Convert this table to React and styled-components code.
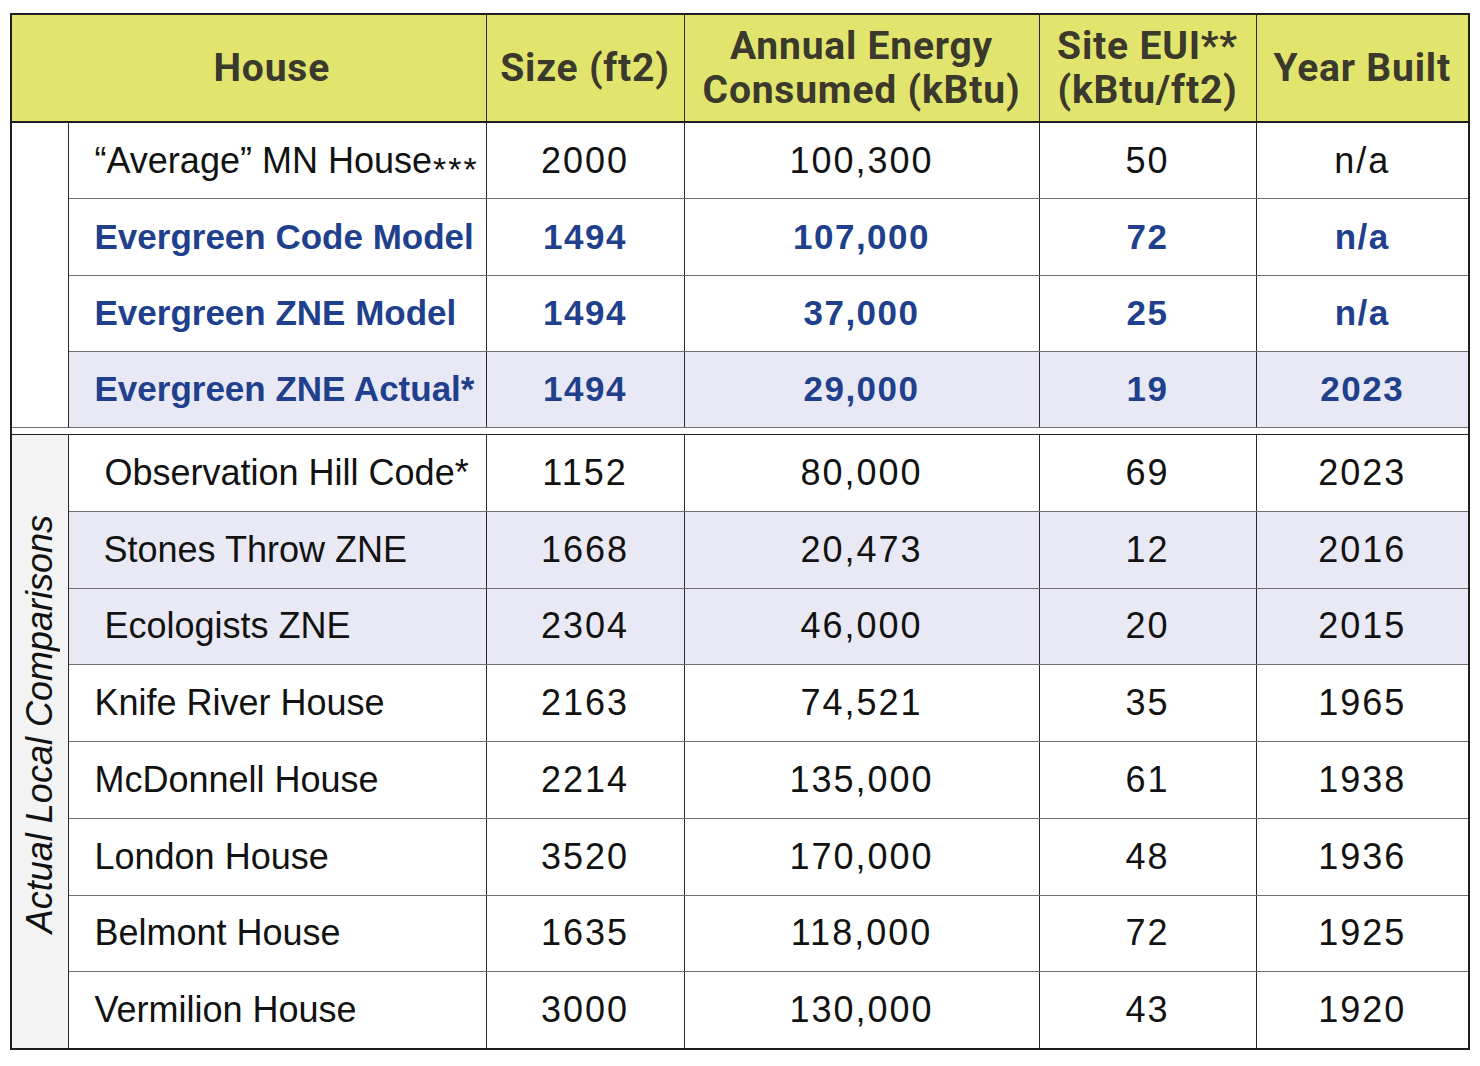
import React from 'react';
import styled, { createGlobalStyle } from 'styled-components';

const GlobalStyle = createGlobalStyle`
  html, body {
    margin: 0;
    padding: 0;
    background: #ffffff;
  }
  body {
    font-family: "Liberation Sans", Arial, sans-serif;
  }
`;

const Page = styled.div`
  padding: 13px 0 0 10px;
  width: 1480px;
  height: 1066px;
  box-sizing: border-box;
`;

const Table = styled.table`
  width: 1458px;
  table-layout: fixed;
  border-collapse: collapse;
  border: 2px solid #1e1e1e;
`;

const HeadCell = styled.th`
  height: 106px;
  padding: 0 ${(p) => p.$padRight || 0}px 0 ${(p) => p.$padLeft || 0}px;
  background: #e2e56d;
  color: #3a392b;
  font-family: Roboto, "Liberation Sans", sans-serif;
  font-weight: 700;
  font-size: 39px;
  line-height: 44px;
  letter-spacing: 0.8px;
  text-align: center;
  vertical-align: middle;
  white-space: nowrap;
  border-left: 1px solid #2a2a2a;
  border-bottom: 2px solid #1e1e1e;
`;

const Row = styled.tr`
  background: ${(p) => (p.$highlight ? '#e9e9f5' : '#ffffff')};
`;

const GroupCell = styled.td`
  padding: 0 0 ${(p) => p.$shift || 0}px 0;
  background: ${(p) => (p.$shaded ? '#f3f3f3' : '#ffffff')};
  border-right: 1px solid #2a2a2a;
  vertical-align: middle;
  text-align: center;
`;

const GroupLabel = styled.span`
  display: inline-block;
  writing-mode: vertical-rl;
  transform: rotate(180deg);
  font-style: italic;
  font-size: 36px;
  color: #111;
  white-space: nowrap;
`;

const Cell = styled.td`
  height: ${(p) => (p.$tall ? 75.75 : 75.25)}px;
  padding: 0 0 0 ${(p) => p.$indent || 0}px;
  text-align: ${(p) => (p.$left ? 'left' : 'center')};
  vertical-align: middle;
  font-size: ${(p) => (p.$strong ? '35px' : '36px')};
  font-weight: ${(p) => (p.$strong ? 700 : 400)};
  letter-spacing: ${(p) => (p.$left ? '0' : p.$strong ? '1.5px' : '2px')};
  color: ${(p) => (p.$strong ? '#203f8c' : '#121212')};
  white-space: nowrap;
  border-left: 1px solid #2a2a2a;
  border-bottom: 1px solid #6e6e6e;
`;

const Stars = styled.span`
  position: relative;
  top: 8px;
  font-size: 34px;
  letter-spacing: 2px;
  margin-left: 1px;
`;

const GapRow = styled.tr`
  background: #ffffff;
`;

const GapCell = styled.td`
  height: 6px;
  padding: 0;
  border-top: 1px solid #6e6e6e;
  border-bottom: 1px solid #1e1e1e;
`;

const modeled = [
  { name: '“Average” MN House', stars: '***', size: '2000', energy: '100,300', eui: '50', year: 'n/a' },
  { name: 'Evergreen Code Model', size: '1494', energy: '107,000', eui: '72', year: 'n/a', strong: true },
  { name: 'Evergreen ZNE Model', size: '1494', energy: '37,000', eui: '25', year: 'n/a', strong: true },
  { name: 'Evergreen ZNE Actual*', size: '1494', energy: '29,000', eui: '19', year: '2023', strong: true, highlight: true },
];

const local = [
  { name: 'Observation Hill Code*', size: '1152', energy: '80,000', eui: '69', year: '2023', indent: 36 },
  { name: 'Stones Throw ZNE', size: '1668', energy: '20,473', eui: '12', year: '2016', indent: 35, highlight: true },
  { name: 'Ecologists ZNE', size: '2304', energy: '46,000', eui: '20', year: '2015', indent: 36, highlight: true },
  { name: 'Knife River House', size: '2163', energy: '74,521', eui: '35', year: '1965' },
  { name: 'McDonnell House', size: '2214', energy: '135,000', eui: '61', year: '1938' },
  { name: 'London House', size: '3520', energy: '170,000', eui: '48', year: '1936' },
  { name: 'Belmont House', size: '1635', energy: '118,000', eui: '72', year: '1925' },
  { name: 'Vermilion House', size: '3000', energy: '130,000', eui: '43', year: '1920' },
];

function DataRow({ house, group, tall }) {
  const values = [house.size, house.energy, house.eui, house.year];
  return (
    <Row $highlight={house.highlight}>
      {group}
      <Cell $left $tall={tall} $indent={house.indent || 26} $strong={house.strong}>
        {house.name}
        {house.stars && <Stars>{house.stars}</Stars>}
      </Cell>
      {values.map((v, i) => (
        <Cell key={i} $tall={tall} $strong={house.strong}>
          {v}
        </Cell>
      ))}
    </Row>
  );
}

export default function App() {
  return (
    <Page>
      <GlobalStyle />
      <Table>
        <colgroup>
          <col style={{ width: 57 }} />
          <col style={{ width: 418 }} />
          <col style={{ width: 198 }} />
          <col style={{ width: 355 }} />
          <col style={{ width: 217 }} />
          <col style={{ width: 213 }} />
        </colgroup>
        <thead>
          <tr>
            <HeadCell colSpan={2} $padLeft={46}>House</HeadCell>
            <HeadCell>Size (ft2)</HeadCell>
            <HeadCell>
              Annual Energy
              <br />
              Consumed (kBtu)
            </HeadCell>
            <HeadCell>
              Site EUI**
              <br />
              (kBtu/ft2)
            </HeadCell>
            <HeadCell>Year Built</HeadCell>
          </tr>
        </thead>
        <tbody>
          {modeled.map((house, i) => (
            <DataRow
              key={house.name}
              house={house}
              group={i === 0 ? <GroupCell rowSpan={modeled.length} /> : null}
            />
          ))}
          <GapRow>
            <GapCell colSpan={6} />
          </GapRow>
          {local.map((house, i) => (
            <DataRow
              key={house.name}
              house={house}
              tall
              group={
                i === 0 ? (
                  <GroupCell rowSpan={local.length} $shaded $shift={30}>
                    <GroupLabel>Actual Local Comparisons</GroupLabel>
                  </GroupCell>
                ) : null
              }
            />
          ))}
        </tbody>
      </Table>
    </Page>
  );
}
